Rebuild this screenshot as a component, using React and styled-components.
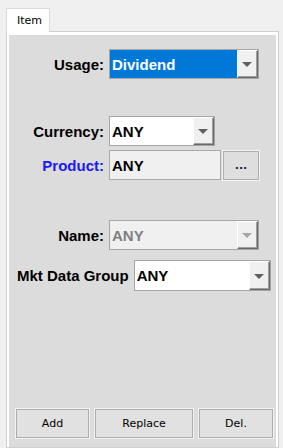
import React from "react";
import styled, { createGlobalStyle } from "styled-components";

const GlobalStyle = createGlobalStyle`
    body {
        margin: 0;
        background: #f0f0f0;
        font-family: "Liberation Sans", Arial, sans-serif;
    }
`;

const Dropdown = ({ width, height = 30, value, selected, disabled }) => (
    <SelectBox $width={width} $height={height} $disabled={disabled}>
        <SelectValue $selected={selected} $disabled={disabled}>{value}</SelectValue>
        <ArrowButton>
            <ArrowIcon $disabled={disabled} />
        </ArrowButton>
    </SelectBox>
);

const App = () => {
    return (
        <Page>
            <GlobalStyle />
            <TabStrip>
                <Tab>Item</Tab>
            </TabStrip>
            <Panel>
                <Form>
                    <FieldRow $top={0}>
                        <Label>Usage:</Label>
                        <Dropdown width={150} value="Dividend" selected />
                    </FieldRow>
                    <FieldRow $top={37}>
                        <Label>Currency:</Label>
                        <Dropdown width={106} value="ANY" />
                    </FieldRow>
                    <FieldRow $top={4}>
                        <Label $link>Product:</Label>
                        <TextField>ANY</TextField>
                        <BrowseButton>...</BrowseButton>
                    </FieldRow>
                    <FieldRow $top={40}>
                        <Label>Name:</Label>
                        <Dropdown width={150} value="ANY" disabled />
                    </FieldRow>
                    <FreeRow $top={10}>
                        <FreeLabel>Mkt Data Group</FreeLabel>
                        <Dropdown width={137} height={31} value="ANY" />
                    </FreeRow>
                </Form>
                <ButtonBar>
                    <ActionButton $width={73}>Add</ActionButton>
                    <ActionButton $width={98}>Replace</ActionButton>
                    <ActionButton $width={74}>Del.</ActionButton>
                </ButtonBar>
            </Panel>
        </Page>
    );
};

export default App;

const Page = styled.div`
    padding: 8px 0 0 6px;
    width: 273px;
`;

const TabStrip = styled.div`
    display: flex;
`;

const Tab = styled.div`
    position: relative;
    z-index: 1;
    box-sizing: border-box;
    width: 44px;
    height: 24px;
    margin-bottom: -1px;
    padding: 5px 0 0 10px;
    background: #fff;
    border: 1px solid #d9d9d9;
    border-bottom: none;
    font-family: "DejaVu Sans", sans-serif;
    font-size: 11px;
    color: #000;
`;

const Panel = styled.div`
    box-sizing: border-box;
    display: flex;
    flex-direction: column;
    height: 417px;
    border: 1px solid #cfcfcf;
    background: #dcdcdc;
    box-shadow: inset 2px 3px 0 #fff, inset -2px 0 0 #fff;
`;

const Form = styled.div`
    display: flex;
    flex-direction: column;
    padding-top: 17px;
`;

const FieldRow = styled.div`
    display: flex;
    align-items: center;
    margin-top: ${(p) => p.$top}px;
`;

const Label = styled.div`
    width: 97px;
    margin-right: 5px;
    text-align: right;
    font-size: 15px;
    font-weight: bold;
    color: ${(p) => (p.$link ? "#1a1af0" : "#000")};
`;

const FreeRow = styled.div`
    display: flex;
    align-items: center;
    margin-top: ${(p) => p.$top}px;
    padding-left: 10px;
`;

const FreeLabel = styled.div`
    margin-right: 5px;
    font-size: 15px;
    font-weight: bold;
    color: #000;
`;

const SelectBox = styled.div`
    box-sizing: border-box;
    display: flex;
    width: ${(p) => p.$width}px;
    height: ${(p) => p.$height}px;
    border: 1px solid #a5a5a5;
    background: ${(p) => (p.$disabled ? "#f0f0f0" : "#fff")};
`;

const SelectValue = styled.div`
    flex: 1;
    display: flex;
    align-items: center;
    padding-left: 2px;
    background: ${(p) => (p.$selected ? "#0078d7" : "transparent")};
    color: ${(p) => (p.$selected ? "#fff" : p.$disabled ? "#7f7f7f" : "#000")};
    font-size: 15px;
    font-weight: bold;
`;

const ArrowButton = styled.div`
    box-sizing: border-box;
    width: 21px;
    display: flex;
    align-items: center;
    justify-content: center;
    background: #f0f0f0;
    border-top: 1px solid #fff;
    border-left: 1px solid #fff;
    border-right: 1px solid #696969;
    border-bottom: 1px solid #696969;
    box-shadow: inset -1px -1px 0 #a0a0a0;
`;

const ArrowIcon = styled.div`
    width: 0;
    height: 0;
    margin: 1px 1px 0 0;
    border-left: 5px solid transparent;
    border-right: 5px solid transparent;
    border-top: 5px solid ${(p) => (p.$disabled ? "#a6a6a6" : "#606060")};
`;

const TextField = styled.div`
    box-sizing: border-box;
    display: flex;
    align-items: center;
    width: 112px;
    height: 30px;
    padding-left: 2px;
    border: 1px solid #a9a9a9;
    background: #f0f0f0;
    font-size: 15px;
    font-weight: bold;
    color: #000;
`;

const BrowseButton = styled.button`
    box-sizing: border-box;
    width: 36px;
    height: 29px;
    margin-left: 2px;
    padding: 0;
    border: 1px solid #adadad;
    box-shadow: 0 0 0 1px #f2f2f2;
    background: #dedede;
    font-family: "DejaVu Sans", sans-serif;
    font-size: 11px;
    font-weight: bold;
    color: #111a40;
`;

const ButtonBar = styled.div`
    display: flex;
    gap: 6px;
    margin-top: auto;
    padding: 0 0 9px 9px;
`;

const ActionButton = styled.button`
    box-sizing: border-box;
    width: ${(p) => p.$width}px;
    height: 29px;
    padding: 0;
    border: 1px solid #adadad;
    box-shadow: 0 0 0 1px #f2f2f2;
    background: #e1e1e1;
    font-family: "DejaVu Sans", sans-serif;
    font-size: 11px;
    color: #000;
`;
